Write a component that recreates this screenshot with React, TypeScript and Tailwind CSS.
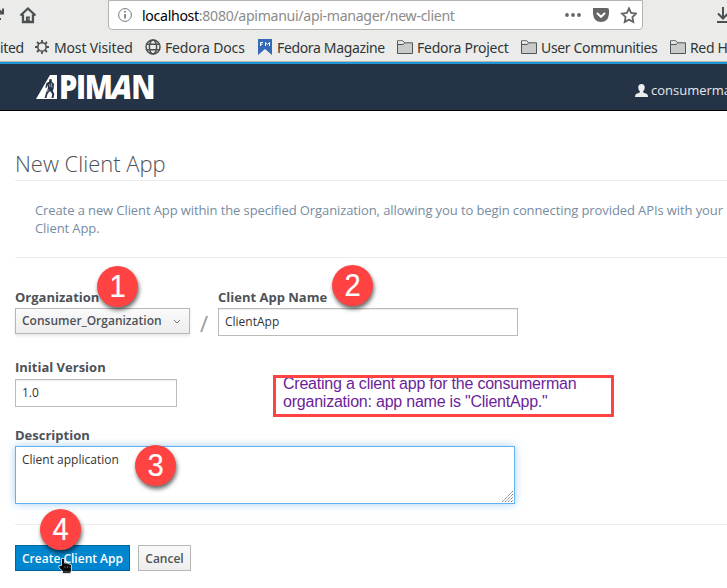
import type { ReactNode } from "react";

function Folder() {
  return (
    <svg width="16" height="14" viewBox="0 0 16 14" className="shrink-0">
      <path d="M.5 13.5V.8H5.8L7.4 2.8H15.5V13.5Z" fill="#c9cbca" stroke="#505658" />
      <path d="M1 4.5H6L7.5 3.2" fill="none" stroke="#505658" />
      <path d="M1 3.8V1.3H5.5L7 3 5.8 3.8Z" fill="#e9e9e9" />
    </svg>
  );
}

function Gear() {
  return (
    <svg width="14" height="14" viewBox="0 0 14 14" className="mr-px shrink-0" fill="none" stroke="#4b5052">
      <circle cx="7" cy="7" r="4.2" strokeWidth="1.6" />
      <path d="M7 0V2.5M7 11.5V14M0 7H2.5M11.5 7H14M2 2L4 4M10 10L12 12M2 12L4 10M10 4L12 2" strokeWidth="1.8" />
    </svg>
  );
}

function Globe() {
  return (
    <svg width="16" height="16" viewBox="0 0 16 16" className="shrink-0" fill="none" stroke="#4b5052" strokeWidth="1.5">
      <circle cx="8" cy="8" r="7" />
      <ellipse cx="8" cy="8" rx="3.6" ry="7" />
      <path d="M1.5 5.3H14.5M1.5 10.7H14.5" />
    </svg>
  );
}

function Bookmark({ icon, label, width }: { icon?: ReactNode; label: string; width: string }) {
  return (
    <div className={`flex h-5 shrink-0 items-center gap-1 ${width}`}>
      {icon}
      <span className="whitespace-nowrap">{label}</span>
    </div>
  );
}

function Badge({ n, place }: { n: number; place: string }) {
  return (
    <div className={`absolute z-10 flex size-[41px] items-center justify-center rounded-full bg-[#ff4343] font-['Liberation_Sans',sans-serif] text-[31px] leading-none text-white shadow-[1px_3px_4px_rgba(0,0,0,0.6)] ${place}`}>
      <span className="scale-x-[0.94] [-webkit-text-stroke:0.2px_white]">{n}</span>
    </div>
  );
}

function Logo() {
  return (
    <div className="flex h-6 items-end">
      <svg width="24" height="24" viewBox="0 0 24 24" className="shrink-0">
        <path d="M0 24L14 0H21V24Z" fill="#fff" />
        <path d="M13.5 4L16 4.5 15.7 6.6 18 9 17.6 14 16.7 15.5 18.3 19 17.5 23H15.5L16.3 19 14 16 11.5 19 10.5 23H8.6L10 17.8 12 13 11.5 10 10.5 13 9.3 12.5 10.5 8 13 6.8Z" fill="#253347" />
        <path d="M13.2 9L14.2 12M15.4 8L15.8 12.5M12 14L11.8 17" stroke="#cbd4dc" strokeWidth=".7" />
      </svg>
      <div className="-ml-px flex h-6 origin-left scale-x-[0.88] items-center font-['Open_Sans',sans-serif] text-[33px] leading-6 font-extrabold tracking-[-1.5px] text-white">
        <span>PIM</span>
        <span className="inline-block skew-x-[-14deg]">A</span>
        <span>N</span>
      </div>
    </div>
  );
}

function Hand() {
  return (
    <svg width="15" height="17" viewBox="0 0 15 17" className="absolute top-[11px] left-[42px] z-20">
      <path d="M3.5 1.5H6.5V6H9L13.5 8V13L12.5 16.3H4.5V14L1 11V8.5H3.5Z" fill="#0b0b0b" stroke="#e8f0f5" strokeWidth=".8" />
      <path d="M7 9V11M9.5 9V11M12 9.5V11" stroke="#777" strokeWidth=".7" />
      <path d="M5 14.5H12" stroke="#555" strokeWidth=".6" />
    </svg>
  );
}

export default function App() {
  return (
    <div className="relative flex h-[588px] w-[727px] flex-col overflow-hidden bg-white font-['Open_Sans',sans-serif] text-[#4d5258]">
      <div className="flex h-[62px] shrink-0 flex-col border-b border-[#b5b5b2] bg-[#ebebea] font-['Noto_Sans',sans-serif] text-[#303638]">
        <div className="flex h-[30px] shrink-0 items-center">
          <svg width="37" height="30" viewBox="0 0 37 30" fill="none" stroke="#4b5052" strokeWidth="2">
            <path d="M-3 13.5H3V8.5M2.5 13L-2 9M0 18V20" />
            <path d="M20.5 15.5L28 8.5 35.5 15.5M23 14.5V22H33V14.5" strokeWidth="2.3" />
            <path d="M26 22V16.5H30V22Z" fill="#4b5052" stroke="none" />
            <path d="M29 18V20" stroke="#ebebea" strokeWidth=".7" />
          </svg>
          <div className="ml-[71px] flex h-[30px] w-[536px] items-center rounded-b-[4px] border border-[#b4b4ae] bg-white pr-[5px] pl-[9px]">
            <svg width="14" height="14" viewBox="0 0 14 14" fill="none" stroke="#777" className="mr-[10px]">
              <circle cx="7" cy="7" r="6.4" />
              <path d="M7 6V10.5M7 3V4.5" strokeWidth="1.7" />
            </svg>
            <div className="grow">
              <span className="inline-block origin-left scale-x-[0.94] text-[15px] tracking-[-0.32px] whitespace-nowrap text-[#8b8b8b]"><span className="text-black">localhost</span>:8080/apimanui/api-manager/new-client</span>
            </div>
            <svg width="73" height="18" viewBox="0 0 73 18" className="shrink-0">
              <g fill="#666"><circle cx="3" cy="9" r="1.9" /><circle cx="9" cy="9" r="1.9" /><circle cx="15" cy="9" r="1.9" /></g>
              <path d="M29 2H43Q45 2 45 4V8Q44 16 37 16 30 16 29 8Z" fill="#666" />
              <path d="M33 7L37 10.8 41 7" fill="none" stroke="white" strokeWidth="2" />
              <path d="M65 2.5L67.1 7 72 7.6 68.4 11 69.3 16 65 13.6 60.7 16 61.6 11 58 7.6 62.9 7Z" fill="none" stroke="#666" strokeWidth="1.8" />
            </svg>
          </div>
          <svg width="10" height="18" viewBox="0 0 10 18" className="ml-[74px]" fill="none" stroke="#4b5052" strokeWidth="2">
            <path d="M6 1V12M1 7.5L6 12.5 11 7.5M0 16H12" />
          </svg>
        </div>
        <div className="mt-[7px] flex items-center text-[14px] tracking-[-0.35px]">
          <Bookmark label="ited" width="w-[35px]" />
          <Bookmark icon={<Gear />} label="Most Visited" width="w-[110px] tracking-[-0.15px]" />
          <Bookmark icon={<Globe />} label="Fedora Docs" width="w-[113px] tracking-[-0.15px]" />
          <Bookmark icon={
            <svg width="14" height="16" viewBox="0 0 14 16" className="mr-px shrink-0">
              <path d="M0 0H14V16L7 10 0 16Z" fill="#3568b5" />
              <path d="M2.5 7V3.5H5M2.5 5.3H4.5M7.5 7V3.5L9.5 5.5 11.5 3.5V7" fill="none" stroke="white" />
            </svg>
          } label="Fedora Magazine" width="w-[139px]" />
          <Bookmark icon={<Folder />} label="Fedora Project" width="w-[124px] tracking-[-0.25px]" />
          <Bookmark icon={<Folder />} label="User Communities" width="w-[149px]" />
          <Bookmark icon={<Folder />} label="Red Hat" width="w-[100px]" />
        </div>
      </div>
      <header className="flex h-[49px] shrink-0 justify-between border-t-2 border-b border-t-[#2196d7] border-b-black bg-[#253347] pt-[11px] pl-[36px]">
        <Logo />
        <div className="flex h-7 w-[92px] items-center gap-[3px] overflow-hidden pt-[3px] text-[13px] text-[#e7e9eb]">
          <svg width="13" height="13" viewBox="0 0 13 13" className="-mt-px shrink-0">
            <path d="M6.5 0C10.5 0 10.5 5 8.2 7.2V8.6L12 10Q13 11 13 13H0Q0 11 1 10L4.8 8.6V7.2C2.5 5 2.5 0 6.5 0Z" fill="#ededed" />
          </svg>
          <span>consumerman</span>
        </div>
      </header>
      <main className="flex flex-col pl-[15px]">
        <h1 className="mt-[36px] h-[34px] border-b border-[#ededed] text-[22px] leading-8 font-light">New Client App</h1>
        <p className="mt-5 h-[57px] border-b border-[#ededed] pl-5 text-[13px] leading-[18px] tracking-[-0.1px] whitespace-nowrap text-[#778ca2]">
          Create a new Client App within the specified Organization, allowing you to begin connecting provided APIs with your<br />Client App.
        </p>
        <div className="mt-[29px] flex h-[50px]">
          <div className="w-[175px]">
            <label className="block h-[21px] text-[13px] leading-5 font-bold">Organization</label>
            <div className="flex h-[26px] items-center justify-between border border-[#b7b7b7] bg-linear-to-b from-[#fafafa] to-[#ededed] px-[6px] text-[12px] font-semibold shadow-[0_2px_3px_rgba(3,3,3,0.1)]">
              Consumer_Organization
              <svg width="12" height="8" viewBox="0 0 12 8" fill="none" stroke="#72767b"><path d="M3 3L6 6 9 3" /></svg>
            </div>
          </div>
          <div className="w-7 pt-[22px] text-center text-[22px] leading-[29px] text-[#999]">/</div>
          <div className="w-[300px]">
            <label className="block h-[21px] text-[13px] leading-5 font-bold">Client App Name</label>
            <div className="h-7 border border-[#bbb] px-[6px] text-[12px] leading-[25px] text-[#333] shadow-[inset_0_1px_1px_rgba(3,3,3,0.075)]">ClientApp</div>
          </div>
        </div>
        <label className="mt-[19px] h-[23px] text-[13px] leading-[22px] font-bold">Initial Version</label>
        <div className="h-7 w-[162px] border border-[#bbb] px-[6px] text-[12px] leading-[26px] text-[#333] shadow-[inset_0_1px_1px_rgba(3,3,3,0.075)]">1.0</div>
        <label className="mt-[17px] h-[22px] text-[13px] leading-[22px] font-bold">Description</label>
        <div className="flex h-[58px] w-[500px] items-end justify-between border border-[#66afe9] px-[6px] text-[12px] text-[#333] shadow-[0_0_8px_rgba(102,175,233,0.6)]">
          <span className="self-start leading-[26px]">Client application</span>
          <svg width="11" height="11" viewBox="0 0 11 11" className="-mr-[5px] mb-px" stroke="#777" strokeDasharray="1.5 .5">
            <path d="M0 11L11 0M3 11L11 3M6 11L11 6M9 11L11 9" />
          </svg>
        </div>
        <div className="mt-5 flex h-[47px] gap-2 border-t border-[#ededed] pt-5 text-[12px] font-semibold">
          <button className="relative h-[26px] w-[115px] border border-[#00659c] bg-[#0085cf] pt-[2px] whitespace-nowrap text-white">Create Client App<Hand /></button>
          <button className="h-[26px] w-[53px] border border-[#b7b7b7] bg-linear-to-b from-[#fafafa] to-[#ededed] pt-[2px]">Cancel</button>
        </div>
      </main>
      <div className="absolute top-[375px] left-[273px] h-[42px] w-[341px] overflow-hidden border-[3px] border-[#ff4343] pl-[7px] font-['Liberation_Sans',sans-serif] text-[16px] tracking-[-0.22px] whitespace-nowrap text-[#6c1f99]">
        <p className="-mt-[3px] leading-[18px]">Creating a client app for the consumerman<br />organization: app name is "ClientApp."</p>
      </div>
      <Badge n={1} place="top-[266px] left-[97px]" />
      <Badge n={2} place="top-[265px] left-[332px]" />
      <Badge n={3} place="top-[445px] left-[135px]" />
      <Badge n={4} place="top-[509px] left-[40px]" />
    </div>
  );
}
